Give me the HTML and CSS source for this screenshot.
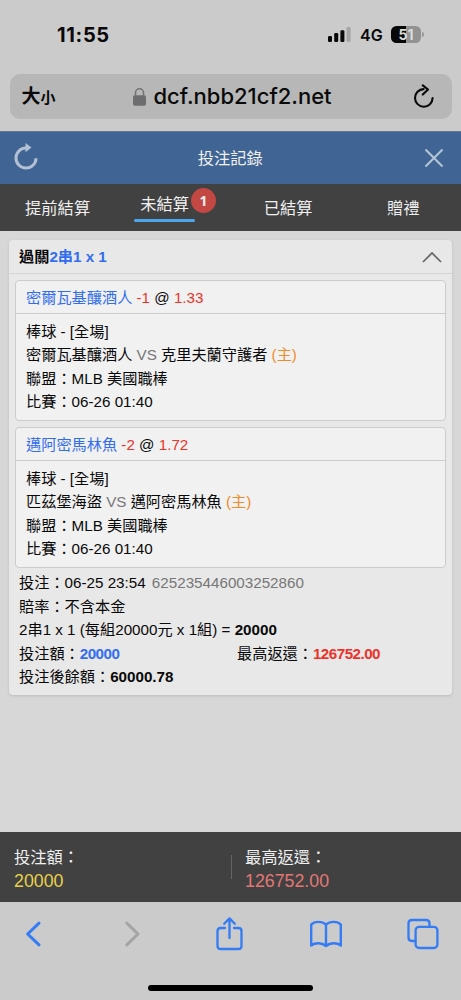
FILE: index.html
```html
<!DOCTYPE html>
<html lang="zh-Hant">
<head>
<meta charset="utf-8">
<meta name="viewport" content="width=device-width, initial-scale=1">
<title>投注記錄</title>
<link rel="stylesheet" href="styles.css">
</head>
<body>
<div class="phone">
  <header class="browser-top">
    <div class="status">
      <span class="time">11:55</span>
      <div class="indicators">
        <svg class="signal" width="23" height="15" viewBox="0 0 23 15"><rect x="0" y="9" width="4" height="6" rx="1.2"/><rect x="6.2" y="6" width="4" height="9" rx="1.2"/><rect x="12.4" y="3.3" width="4" height="11.7" rx="1.2"/><rect x="18.6" y="0" width="4" height="15" rx="1.2" fill="#a5a5a5"/></svg>
        <span class="network">4G</span>
        <div class="battery"><span>51</span></div>
        <i class="battery-tip"></i>
      </div>
    </div>
    <div class="address">
      <span class="size">大<small>小</small></span>
      <div class="domain">
        <svg width="13" height="18" viewBox="0 0 13 18"><rect y="7.3" width="13" height="10.5" rx="2" fill="#6d6d70"/><path d="M2.5 8V4.8a4 4 0 0 1 8 0V8" fill="none" stroke="#747477" stroke-width="1.6"/></svg>
        <span class="url">dcf.nbb21cf2.net</span>
      </div>
      <svg class="reload" width="22" height="26" viewBox="0 0 22 26"><path d="M10.6 5.1A8.8 8.8 0 1 0 19.6 14.1M9.8 1.4l5.2 4.1-5.2 5.1" fill="none" stroke="#080808" stroke-width="2.1" stroke-linecap="round" stroke-linejoin="round"/></svg>
    </div>
  </header>
  <div class="titlebar">
    <svg width="24" height="27" viewBox="0 0 24 27"><path d="M12.2 5.1A10 10 0 1 0 22 15.2" fill="none" stroke="#b1c0d3" stroke-width="3"/><path d="M11.5 0l6 4.4-6 4.9z" fill="#b1c0d3"/></svg>
    <h1>投注記錄</h1>
    <svg width="20" height="20" viewBox="0 0 20 20"><path d="M1.5 1.5l17 17m0-17l-17 17" stroke="#b6c5d7" stroke-width="2"/></svg>
  </div>
  <nav class="tabs">
    <div class="tab">提前結算</div>
    <div class="tab active"><span>未結算</span><b class="badge">1</b></div>
    <div class="tab">已結算</div>
    <div class="tab">贈禮</div>
  </nav>
  <main class="content">
    <section class="card">
      <div class="card-head">
        <strong>過關<span class="blue">2串1 x 1</span></strong>
        <svg width="20" height="12" viewBox="0 0 20 12"><path d="M1 11l9-9 9 9" fill="none" stroke="#666" stroke-width="1.7"/></svg>
      </div>
      <div class="card-body">
        <article class="bet">
          <div class="pick"><span class="blue">密爾瓦基釀酒人</span> <span class="red">-1</span> @ <span class="red">1.33</span></div>
          <div class="details">
            <p>棒球 - [全場]</p>
            <p>密爾瓦基釀酒人 <span class="gray">VS</span> 克里夫蘭守護者 <span class="orange">(主)</span></p>
            <p>聯盟：MLB 美國職棒</p>
            <p>比賽：06-26 01:40</p>
          </div>
        </article>
        <article class="bet">
          <div class="pick"><span class="blue">邁阿密馬林魚</span> <span class="red">-2</span> @ <span class="red">1.72</span></div>
          <div class="details">
            <p>棒球 - [全場]</p>
            <p>匹茲堡海盜 <span class="gray">VS</span> 邁阿密馬林魚 <span class="orange">(主)</span></p>
            <p>聯盟：MLB 美國職棒</p>
            <p>比賽：06-26 01:40</p>
          </div>
        </article>
        <div class="summary">
          <p>投注：06-25 23:54 <span class="gray ticket">625235446003252860</span></p>
          <p>賠率：不含本金</p>
          <p>2串1 x 1 (每組20000元 x 1組) = <b>20000</b></p>
          <div class="amounts"><p>投注額：<b class="blue">20000</b></p><p>最高返還：<b class="red">126752.00</b></p></div>
          <p>投注後餘額：<b>60000.78</b></p>
        </div>
      </div>
    </section>
  </main>
  <footer class="totals">
    <div class="total"><span>投注額：</span><span class="number yellow">20000</span></div>
    <i class="divider"></i>
    <div class="total"><span>最高返還：</span><span class="number pink">126752.00</span></div>
  </footer>
  <div class="toolbar">
    <div class="tools">
      <svg width="34" height="34" viewBox="-8 -3 34 34"><path d="M14 3.200L2.700 14l11.300 10.800" stroke-width="3"/></svg>
      <svg class="disabled" width="34" height="34" viewBox="-11 -3 34 34"><path d="M1.800 3.200L13 14l-11.200 10.800" stroke-width="3"/></svg>
      <svg width="34" height="34" viewBox="-3.500 0 34 34"><path d="M9.500 11H5q-3 0-3 3v15q0 3 3 3h18q3 0 3-3V14q0-3-3-3h-4.500M14 21V1.500M8.700 6.700L14 1.400l5.300 5.300" stroke-width="2.300"/></svg>
      <svg width="34" height="28" viewBox="0 0 34 28"><path d="M17 4.500C13 1 5.500 1 2.200 4.600V25.500C6 22.500 13 22.500 17 26C21 22.500 28 22.500 31.800 25.500V4.600C28.500 1 21 1 17 4.500V26" stroke-width="2.400"/></svg>
      <svg width="34" height="32" viewBox="-1 0 34 32"><path d="M8.500 23H5q-3.500 0-3.500-3.500v-14Q1.500 2 5 2h14q3.500 0 3.500 3.500v3" stroke-width="2.300"/><rect x="8.600" y="8.800" width="21.800" height="21.200" rx="3.500" stroke-width="2.300"/></svg>
    </div>
    <i class="home"></i>
  </div>
</div>
</body>
</html>
```

FILE: styles.css
```css
* { box-sizing: border-box; }
body { margin: 0; background: #d7d7d7; font-family: "Liberation Sans", "Noto Sans CJK TC", sans-serif; color: #090909; }
p, h1 { margin: 0; }
svg { display: block; flex-shrink: 0; }
.phone { width: 461px; height: 1000px; display: flex; flex-direction: column; overflow: hidden; background: #d7d7d7; }
.browser-top { height: 131px; flex-shrink: 0; background: #cbcbcb; font-family: Inter, "Noto Sans CJK TC", sans-serif; }
.status { height: 74px; padding: 24px 37px 0 57px; display: flex; align-items: flex-start; justify-content: space-between; }
.time { font-size: 20px; font-weight: 650; line-height: 22px; letter-spacing: .65px; }
.indicators { display: flex; align-items: center; height: 21px; }
.signal { fill: #080808; }
.network { margin-left: 9px; width: 23px; font-size: 16px; font-weight: 600; white-space: nowrap; letter-spacing: 0; }
.battery { margin-left: 8px; width: 30px; height: 17px; border-radius: 5.5px; background: linear-gradient(90deg, #080808 50%, #929292 50%); color: #dcdcdc; display: flex; align-items: center; justify-content: center; font-size: 14px; font-weight: 700; }
.battery-tip { width: 2px; height: 5px; margin-left: 1px; border-radius: 0 2px 2px 0; background: #999; }
.address { height: 45px; margin: 0 9.5px; border-radius: 10px; background: #b7b7b7; padding: 0 17px 0 12px; display: flex; align-items: center; }
.size { width: 111px; font-size: 19px; font-weight: 700; line-height: 45px; }
.size small { font-size: 15px; }
.domain { flex: 1; display: flex; align-items: center; gap: 8px; }
.url { font-size: 22px; font-weight: 500; line-height: 45px; white-space: nowrap; }
.titlebar { height: 53px; flex-shrink: 0; border-top: 1px solid #65788f; background: #406493; color: #f0f0f0; padding: 0 16.500px 0 14px; display: flex; align-items: center; justify-content: space-between; }
.titlebar h1 { font-size: 16.3px; font-weight: 400; line-height: 24px; margin: 0 2px 1px 0; }
.titlebar svg:first-child { margin-top: -4px; }
.tabs { height: 47px; flex-shrink: 0; background: #414141; display: grid; grid-template-columns: repeat(4, 1fr); color: #efefef; font-size: 16.3px; }
.tab { display: flex; justify-content: center; line-height: 48px; white-space: nowrap; }
.active { padding-left: 25px; justify-content: flex-start; gap: 2px; }
.active span { height: 38px; line-height: 40px; position: relative; }
.active span::after { content: ""; position: absolute; left: -6px; right: -6px; bottom: 0; height: 3.5px; border-radius: 2px; background: #4aa7ee; }
.badge { width: 25px; height: 25px; margin-top: 4px; border-radius: 50%; background: #c34742; font: 700 14px/25px "Open Sans", sans-serif; text-align: center; }
.content { flex: 1; padding: 9px 9px 0; }
.card { height: 455px; border-radius: 4px; background: #e8e8e8; box-shadow: 0 1px 3px #00000020; font-size: 15.2px; }
.card-head { height: 34px; border-bottom: 1px solid #d5d5d5; padding: 0 10px; display: flex; align-items: center; justify-content: space-between; line-height: 32px; }
.card-body { padding: 6px; display: flex; flex-direction: column; gap: 6px; }
.bet { height: 141px; border: 1px solid #cccccc; border-radius: 4px; background: #f1f1f1; white-space: nowrap; }
.pick { height: 33px; border-bottom: 1px solid #cccccc; padding-left: 10px; line-height: 33px; }
.details { padding: 5.5px 10px; line-height: 23.5px; }
.summary { padding: 0 4px; margin-top: -3px; line-height: 23.5px; white-space: nowrap; }
.ticket { margin-left: 2px; }
.amounts { display: grid; grid-template-columns: 218px 1fr; }
.amounts b { letter-spacing: -.52px; }
.blue { color: #326df0; }
.red { color: #ed3329; }
.gray { color: #777; }
.orange { color: #f18b2c; }
.totals { height: 70px; flex-shrink: 0; background: #414141; color: #efefef; padding: 0 14px; display: flex; align-items: center; }
.total { width: 217px; flex-shrink: 0; display: flex; flex-direction: column; padding-top: 4px; font-size: 16.3px; line-height: 24px; }
.number { font-size: 17.8px; }
.yellow { color: #e8d04c; }
.pink { color: #e17875; }
.divider { width: 1px; height: 24px; margin-right: 13px; background: #656565; flex-shrink: 0; }
.toolbar { height: 98px; flex-shrink: 0; background: #cbcbcb; display: flex; flex-direction: column; align-items: center; justify-content: space-between; padding-bottom: 9px; }
.tools { width: 100%; height: 63px; padding: 0 21px 0 17px; display: flex; align-items: center; justify-content: space-between; }
.tools svg { fill: none; stroke: #347bf4; stroke-linejoin: round; stroke-linecap: round; }
.tools .disabled { stroke: #a4a4a4; }
.home { width: 165px; height: 6px; border-radius: 3px; background: #000; }
```
